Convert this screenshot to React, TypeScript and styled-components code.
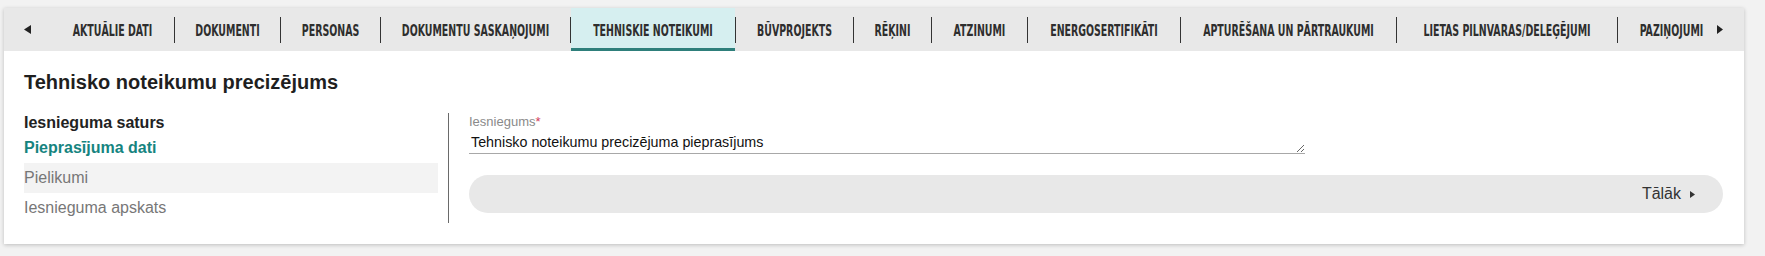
import styled, { createGlobalStyle } from "styled-components"

const Global = createGlobalStyle`
    body{
        margin:0;
        background:#f2f2f2;
        font-family:"Liberation Sans", Arial, sans-serif;
    }
`
const Page = styled.div`
    padding:8px 21px 12px 4px;
`
const Card = styled.div`
    background:#fff;
    box-shadow:0 1px 4px rgba(0,0,0,0.22);
`
const TabBar = styled.div`
    height:43px;
    background:#e8e8e8;
    display:flex;
    align-items:stretch;
`
const ArrowBox = styled.div<{ $w: number; $pad?: number }>`
    flex:0 0 ${p => p.$w}px;
    display:flex;
    align-items:center;
    justify-content:${p => (p.$pad ? "flex-start" : "center")};
    padding-left:${p => p.$pad || 0}px;
    box-sizing:border-box;
    color:#222;
`
const TabStrip = styled.div`
    flex:1;
    min-width:0;
    overflow:hidden;
    display:flex;
    align-items:stretch;
`
const Tab = styled.div<{ $active?: boolean }>`
    flex:none;
    padding:0 21px;
    display:flex;
    align-items:center;
    background:${p => (p.$active ? "#d6eff0" : "transparent")};
    box-shadow:${p => (p.$active ? "inset 0 -3px 0 #2e7f7b" : "none")};
`
const TabLabel = styled.div<{ $w: number }>`
    width:${p => p.$w}px;
    display:flex;
    justify-content:center;
    white-space:nowrap;
`
const TabText = styled.span`
    display:inline-block;
    font-family:"DejaVu Sans Condensed", "Liberation Sans Narrow", "Liberation Sans", sans-serif;
    font-weight:700;
    font-size:10.5px;
    line-height:11px;
    color:#2e2e2e;
    transform:scaleY(1.45);
    margin-top:2px;
`
const Sep = styled.div`
    flex:none;
    width:1px;
    height:26px;
    align-self:center;
    margin-top:1px;
    background:#333;
`
const Body = styled.div`
    padding:19px 21px 21px 20px;
`
const Title = styled.h2`
    margin:0 0 19px 0;
    font-size:20px;
    line-height:24px;
    font-weight:700;
    color:#1f1f1f;
`
const Content = styled.div`
    display:flex;
    align-items:stretch;
`
const Nav = styled.div`
    flex:0 0 414px;
`
const NavHead = styled.div`
    font-size:16px;
    line-height:20px;
    font-weight:700;
    color:#222;
`
const NavItem = styled.div<{ $active?: boolean; $hover?: boolean }>`
    font-size:16px;
    line-height:30px;
    font-weight:${p => (p.$active ? 700 : 400)};
    color:${p => (p.$active ? "#16847f" : "#777")};
    background:${p => (p.$hover ? "#f3f3f3" : "transparent")};
`
const Divider = styled.div`
    flex:none;
    width:1px;
    background:#6a6a6a;
    margin:0 20px 0 10px;
`
const Form = styled.div`
    flex:1;
    min-width:0;
`
const Label = styled.div`
    font-size:13px;
    line-height:18px;
    color:#8a8a8a;
`
const Req = styled.span`
    color:#d23c5a;
`
const Field = styled.textarea`
    display:block;
    width:66.67%;
    box-sizing:border-box;
    height:23px;
    margin:0;
    padding:2px 2px 2px 2px;
    border:none;
    border-bottom:1px solid #a8a8a8;
    outline:none;
    overflow:hidden;
    resize:vertical;
    font-family:"Liberation Sans", Arial, sans-serif;
    font-size:14.3px;
    line-height:18px;
    color:#111;
    background:transparent;
`
const NextBar = styled.div`
    margin-top:21px;
    height:38px;
    border-radius:19px;
    background:#e8e8e8;
    display:flex;
    align-items:center;
    justify-content:flex-end;
    padding-right:28px;
`
const NextButton = styled.div`
    display:flex;
    align-items:center;
    gap:9px;
    font-size:16px;
    color:#333;
`

const tabs = [
    { label: "AKTUĀLIE DATI", w: 81 },
    { label: "DOKUMENTI", w: 63 },
    { label: "PERSONAS", w: 57 },
    { label: "DOKUMENTU SASKAŅOJUMI", w: 147 },
    { label: "TEHNISKIE NOTEIKUMI", w: 122, active: true },
    { label: "BŪVPROJEKTS", w: 75 },
    { label: "RĒĶINI", w: 35 },
    { label: "ATZINUMI", w: 53 },
    { label: "ENERGOSERTIFIKĀTI", w: 110 },
    { label: "APTURĒŠANA UN PĀRTRAUKUMI", w: 173 },
    { label: "LIETAS PILNVARAS/DELEĢĒJUMI", w: 178 },
    { label: "PAZIŅOJUMI", w: 65 },
]

function Triangle({ dir, w, h }: { dir: "left" | "right"; w: number; h: number }) {
    const pts = dir === "left" ? `${w},0 ${w},${h} 0,${h / 2}` : `0,0 0,${h} ${w},${h / 2}`
    return (
        <svg width={w} height={h} viewBox={`0 0 ${w} ${h}`}>
            <polygon points={pts} fill="currentColor" />
        </svg>
    )
}

export default function App() {
    return (
        <>
            <Global />
            <Page>
                <Card>
                    <TabBar>
                        <ArrowBox $w={47}>
                            <Triangle dir="left" w={7} h={9} />
                        </ArrowBox>
                        <TabStrip>
                            {tabs.map((t, i) => (
                                <div key={t.label} style={{ display: "contents" }}>
                                    {i > 0 && <Sep />}
                                    <Tab $active={t.active}>
                                        <TabLabel $w={t.w}>
                                            <TabText>{t.label}</TabText>
                                        </TabLabel>
                                    </Tab>
                                </div>
                            ))}
                        </TabStrip>
                        <ArrowBox $w={36} $pad={9}>
                            <Triangle dir="right" w={6} h={9} />
                        </ArrowBox>
                    </TabBar>
                    <Body>
                        <Title>Tehnisko noteikumu precizējums</Title>
                        <Content>
                            <Nav>
                                <NavHead>Iesnieguma saturs</NavHead>
                                <NavItem $active>Pieprasījuma dati</NavItem>
                                <NavItem $hover>Pielikumi</NavItem>
                                <NavItem>Iesnieguma apskats</NavItem>
                            </Nav>
                            <Divider />
                            <Form>
                                <Label>
                                    Iesniegums<Req>*</Req>
                                </Label>
                                <Field readOnly rows={1} defaultValue="Tehnisko noteikumu precizējuma pieprasījums" />
                                <NextBar>
                                    <NextButton>
                                        Tālāk
                                        <Triangle dir="right" w={5} h={7} />
                                    </NextButton>
                                </NextBar>
                            </Form>
                        </Content>
                    </Body>
                </Card>
            </Page>
        </>
    )
}
